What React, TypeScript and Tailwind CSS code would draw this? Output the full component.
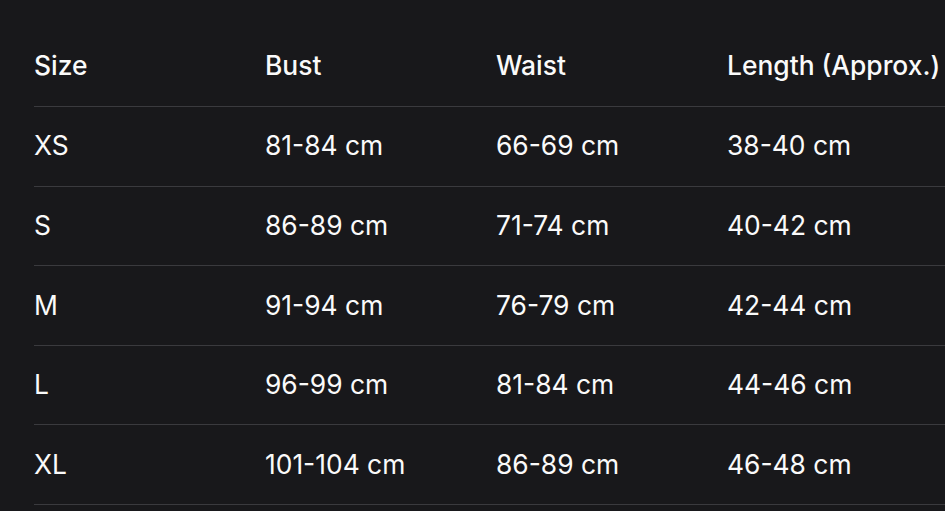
import React from 'react';

const rows = [
  ['XS', '81-84 cm', '66-69 cm', '38-40 cm'],
  ['S', '86-89 cm', '71-74 cm', '40-42 cm'],
  ['M', '91-94 cm', '76-79 cm', '42-44 cm'],
  ['L', '96-99 cm', '81-84 cm', '44-46 cm'],
  ['XL', '101-104 cm', '86-89 cm', '46-48 cm'],
];

const headers = ['Size', 'Bust', 'Waist', 'Length (Approx.)'];

export default function App() {
  return (
    <div
      className="w-[945px] h-[511px] overflow-hidden bg-[#18181b] text-[#fafafa] pt-[26px] pl-[34px]"
      style={{ fontFamily: 'Inter, "Noto Sans", sans-serif' }}
    >
      <div className="w-[960px]">
        {/* Header */}
        <div className="grid grid-cols-[231px_231px_231px_267px] h-[81px] items-center border-b border-[#3a3a3e] text-[26.4px] font-medium">
          {headers.map(h => (
            <div key={h} className="whitespace-nowrap">{h}</div>
          ))}
        </div>

        {/* Body */}
        {rows.map(r => (
          <div
            key={r[0]}
            className="grid grid-cols-[231px_231px_231px_267px] h-[79.6px] items-center border-b border-[#3a3a3e] text-[26.4px]"
          >
            {r.map((c, i) => (
              <div key={i} className="whitespace-nowrap">{c}</div>
            ))}
          </div>
        ))}
      </div>
    </div>
  );
}
